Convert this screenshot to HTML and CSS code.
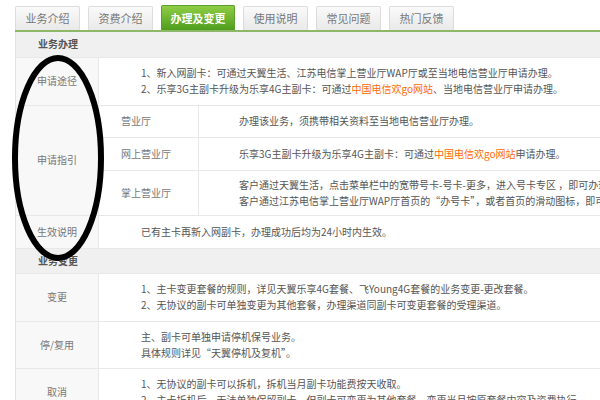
FILE: index.html
```html
<!DOCTYPE html>
<html lang="zh-CN">
<head>
    <meta charset="UTF-8">
    <meta name="viewport" content="width=device-width, initial-scale=1.0">
    <title>办理及变更</title>
    <link rel="stylesheet" href="styles.css">
</head>
<body>
    <div class="page">
        <ul class="tabs">
            <li class="tab">业务介绍</li>
            <li class="tab">资费介绍</li>
            <li class="tab active">办理及变更</li>
            <li class="tab">使用说明</li>
            <li class="tab">常见问题</li>
            <li class="tab">热门反馈</li>
        </ul>

        <table class="info">
            <tr class="section">
                <td colspan="3">业务办理</td>
            </tr>
            <tr class="h48">
                <td class="label">申请途径</td>
                <td colspan="2" class="text wide">
                    1、新入网副卡：可通过天翼生活、江苏电信掌上营业厅WAP厅或至当地电信营业厅申请办理。<br>
                    2、乐享3G主副卡升级为乐享4G主副卡：可通过<a href="#">中国电信欢go网站</a>、当地电信营业厅申请办理。
                </td>
            </tr>
            <tr class="h32">
                <td class="label" rowspan="3">申请指引</td>
                <td class="sub">营业厅</td>
                <td class="text">办理该业务，须携带相关资料至当地电信营业厅办理。</td>
            </tr>
            <tr class="h33">
                <td class="sub">网上营业厅</td>
                <td class="text">乐享3G主副卡升级为乐享4G主副卡：可通过<a href="#">中国电信欢go网站</a>申请办理。</td>
            </tr>
            <tr class="h45">
                <td class="sub">掌上营业厅</td>
                <td class="text">
                    客户通过天翼生活，点击菜单栏中的宽带号卡-号卡-更多，进入号卡专区 ，即可办理。<br>
                    客户通过江苏电信掌上营业厅WAP厅首页的“办号卡”，或者首页的滑动图标，即可办理。
                </td>
            </tr>
            <tr class="h33">
                <td class="label">生效说明</td>
                <td colspan="2" class="text wide">已有主卡再新入网副卡，办理成功后均为24小时内生效。</td>
            </tr>
            <tr class="section">
                <td colspan="3">业务变更</td>
            </tr>
            <tr class="h48">
                <td class="label">变更</td>
                <td colspan="2" class="text wide">
                    1、主卡变更套餐的规则，详见天翼乐享4G套餐、飞Young4G套餐的业务变更-更改套餐。<br>
                    2、无协议的副卡可单独变更为其他套餐，办理渠道同副卡可变更套餐的受理渠道。
                </td>
            </tr>
            <tr class="h47">
                <td class="label">停/复用</td>
                <td colspan="2" class="text wide">
                    主、副卡可单独申请停机保号业务。<br>
                    具体规则详见“天翼停机及复机”。
                </td>
            </tr>
            <tr class="h48">
                <td class="label">取消</td>
                <td colspan="2" class="text wide">
                    1、无协议的副卡可以拆机，拆机当月副卡功能费按天收取。<br>
                    2、主卡拆机后，无法单独保留副卡，但副卡可变更为其他套餐，变更当月按原套餐内容及资费执行。
                </td>
            </tr>
        </table>

        <svg class="mark" width="104" height="214" viewBox="0 0 104 214">
            <ellipse cx="50" cy="107" rx="43" ry="100" fill="none" stroke="#000" stroke-width="6"/>
        </svg>
    </div>
</body>
</html>
```

FILE: styles.css
```css
* {
    margin: 0;
    padding: 0;
    box-sizing: border-box;
}

html, body {
    width: 600px;
    height: 400px;
    overflow: hidden;
    background: #fff;
}

body {
    font-family: "Noto Sans CJK SC", "DejaVu Sans", sans-serif;
    font-size: 10px;
    color: #555;
}

.page {
    position: relative;
    padding-left: 15px;
    padding-top: 7px;
}

.tabs {
    list-style: none;
    display: flex;
    align-items: flex-end;
    gap: 8px;
    height: 25px;
    border-bottom: 2px solid #8db86a;
    width: 800px;
}

.tab {
    width: 65px;
    height: 24px;
    line-height: 23px;
    text-align: center;
    font-size: 11px;
    color: #777;
    background: linear-gradient(#fafafa, #e9e9e9);
    border: 1px solid #dcdcdc;
    border-bottom: none;
    border-radius: 2px 2px 0 0;
}

.tab.active {
    width: 74px;
    height: 25px;
    line-height: 25px;
    color: #fff;
    font-weight: bold;
    background: linear-gradient(#8fcd45, #4f9d1d);
    border: 1px solid #5c9e2c;
    border-bottom: none;
}

.info {
    width: 760px;
    border-collapse: collapse;
    border-left: 1px solid #e2e2e2;
}

.info td {
    border-bottom: 1px solid #e8e8e8;
    vertical-align: middle;
    line-height: 16px;
}

.section td {
    height: 25px;
    background: #f0f0f0;
    font-weight: bold;
    color: #555;
    padding-left: 22px;
}

.label {
    width: 83px;
    text-align: center;
    color: #777;
    background: #f8f8f8;
    border-right: 1px solid #e8e8e8;
}

.sub {
    width: 100px;
    padding-left: 22px;
    color: #777;
    border-right: 1px solid #e8e8e8;
}

.text {
    white-space: nowrap;
    padding-left: 40px;
}

.text.wide {
    padding-left: 42px;
}

.text a {
    color: #ff6a00;
    text-decoration: none;
}

.h32 { height: 32px; }
.h33 { height: 33px; }
.h45 { height: 45px; }
.h47 { height: 47px; }
.h48 { height: 48px; }

.mark {
    position: absolute;
    left: 8px;
    top: 51px;
}
```
